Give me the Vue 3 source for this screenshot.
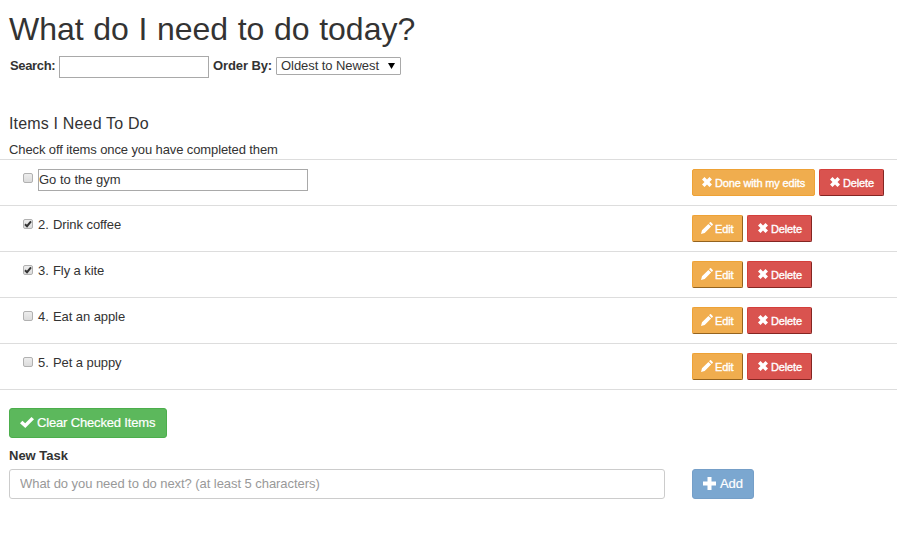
<script setup>
import { ref } from 'vue'

const search = ref('')
const order = ref('Oldest to Newest')
const draft = ref('')
const items = ref([
  { id: 1, text: 'Go to the gym', done: false, editing: true },
  { id: 2, text: 'Drink coffee', done: true, editing: false },
  { id: 3, text: 'Fly a kite', done: true, editing: false },
  { id: 4, text: 'Eat an apple', done: false, editing: false },
  { id: 5, text: 'Pet a puppy', done: false, editing: false }
])

function remove(id) {
  items.value = items.value.filter((i) => i.id !== id)
}
function clearChecked() {
  items.value = items.value.filter((i) => !i.done)
}
function add() {
  const nextId = Math.max(0, ...items.value.map((i) => i.id)) + 1
  items.value.push({ id: nextId, text: draft.value, done: false, editing: false })
  draft.value = ''
}
</script>

<template>
  <main class="page">
    <h1>What do I need to do today?</h1>
    <div class="filters">
      <label for="search">Search:</label>
      <input id="search" v-model="search" class="search" type="text" />
      <label for="order" class="order-label">Order By:</label>
      <div class="select">
        <select id="order" v-model="order">
          <option>Oldest to Newest</option>
          <option>Newest to Oldest</option>
        </select>
        <svg class="arrow" viewBox="0 0 7 6"><path d="M0 0h7L3.5 6z" /></svg>
      </div>
    </div>

    <h2>Items I Need To Do</h2>
    <p class="hint">Check off items once you have completed them</p>

    <ul class="list">
      <li v-for="item in items" :key="item.id" class="row">
        <div class="task">
          <span class="box">
            <input v-model="item.done" type="checkbox" />
            <svg v-if="item.done" viewBox="0 0 10 10"><path d="M2 5.3 4 7.2 8 2.4" /></svg>
          </span>
          <input v-if="item.editing" v-model="item.text" class="edit" type="text" />
          <span v-else class="name"><span class="number">{{ item.id }}.</span>{{ item.text }}</span>
        </div>
        <div class="actions">
          <button v-if="item.editing" class="btn small warning done" @click="item.editing = false">
            <svg class="cross" viewBox="0 0 10 10"><path d="M2.5 0 5 2.5 7.5 0 10 2.5 7.5 5 10 7.5 7.5 10 5 7.5 2.5 10 0 7.5 2.5 5 0 2.5z" /></svg>
            <span>Done with my edits</span>
          </button>
          <button v-else class="btn small warning bevel" @click="item.editing = true">
            <svg class="pencil" viewBox="0 0 12 12"><path d="M0 12 1 8.3 7.4 1.9 10.1 4.6 3.7 11zM8.1 1.2 9 .3Q9.5-.2 10 .3L11.7 2Q12.2 2.5 11.7 3L10.8 3.9z" /></svg>
            <span>Edit</span>
          </button>
          <button class="btn small danger bevel" @click="remove(item.id)">
            <svg class="cross" viewBox="0 0 10 10"><path d="M2.5 0 5 2.5 7.5 0 10 2.5 7.5 5 10 7.5 7.5 10 5 7.5 2.5 10 0 7.5 2.5 5 0 2.5z" /></svg>
            <span>Delete</span>
          </button>
        </div>
      </li>
    </ul>

    <button class="btn success" @click="clearChecked">
      <svg class="tick" viewBox="0 0 14 11"><path d="M0 6.2 2.4 3.8 5.2 6.3 11.5 0 14 2.3 5.3 11z" /></svg>
      <span>Clear Checked Items</span>
    </button>

    <label class="new-label" for="task">New Task</label>
    <div class="new-row">
      <input id="task" v-model="draft" class="new-task" type="text" placeholder="What do you need to do next? (at least 5 characters)" />
      <button class="btn primary" :disabled="draft.length < 5" @click="add">
        <svg class="plus" viewBox="0 0 13 13"><path d="M4.5 0h4v4.5H13v4H8.5V13h-4V8.5H0v-4h4.5z" /></svg>
        <span>Add</span>
      </button>
    </div>
  </main>
</template>

<style>
body {
  margin: 0;
  background: #fff;
}
</style>

<style scoped>
* {
  box-sizing: border-box;
}
.page {
  height: 535px;
  padding-top: 10px;
  overflow: hidden;
  color: #333;
  font: 13px/18px "Liberation Sans", Arial, sans-serif;
}
input,
select,
button {
  margin: 0;
  font: inherit;
  color: inherit;
  letter-spacing: inherit;
}
h1 {
  height: 36px;
  margin: 0 0 0 9px;
  font-size: 32px;
  font-weight: 400;
  line-height: 38px;
  word-spacing: 0.7px;
}
.filters {
  display: flex;
  height: 32px;
  padding: 10px 0 0 10px;
}
label {
  font-weight: 700;
}
.filters label {
  width: 49px;
  padding-top: 1px;
  letter-spacing: -0.35px;
  white-space: nowrap;
}
.search {
  width: 150px;
  height: 22px;
  border: 1px solid #a9a9a9;
}
.filters .order-label {
  width: 63px;
  margin-left: 4px;
  letter-spacing: -0.1px;
}
.select {
  position: relative;
  width: 125px;
  height: 18px;
  margin-top: 1px;
  letter-spacing: -0.06px;
}
select {
  display: block;
  width: 100%;
  height: 18px;
  padding: 0 4px;
  border: 1px solid #a9a9a9;
  border-radius: 1px;
  background: #fff;
  line-height: 16px;
  appearance: none;
}
.arrow {
  position: absolute;
  top: 6px;
  right: 6px;
  width: 7px;
  height: 6px;
  fill: #000;
}
h2 {
  margin: 36px 0 0 9px;
  font-size: 16px;
  font-weight: 400;
  line-height: 20px;
  letter-spacing: 0.17px;
}
.hint {
  margin: 6px 0 0 9px;
  line-height: 19px;
  letter-spacing: -0.11px;
}
.list {
  margin: 0;
  padding: 0;
  list-style: none;
}
.row {
  display: flex;
  height: 46px;
  border-top: 1px solid #ddd;
}
.row:last-child {
  height: 47px;
  border-bottom: 1px solid #ddd;
}
.task {
  display: flex;
  width: 692px;
  padding: 9px 0 0 23px;
}
.box {
  position: relative;
  width: 10px;
  height: 10px;
  margin: 4px 5px 0 0;
}
.box input {
  display: block;
  width: 10px;
  height: 10px;
  border: 1px solid #b1b1b1;
  border-radius: 2px;
  background: linear-gradient(#ededed, #dcdcdc);
  appearance: none;
}
.box svg {
  position: absolute;
  inset: 0;
  width: 10px;
  height: 10px;
  fill: none;
  stroke: #333;
  stroke-width: 2;
  pointer-events: none;
}
.edit {
  width: 270px;
  height: 22px;
  padding: 0 0 2px;
  border: 1px solid #a9a9a9;
}
.name {
  padding-top: 1px;
  letter-spacing: -0.08px;
}
.number {
  display: inline-block;
  width: 15px;
}
.actions {
  display: flex;
  gap: 4px;
  padding-top: 9px;
}
.btn {
  display: flex;
  align-items: center;
  height: 30px;
  padding: 0 10px;
  border: 1px solid;
  border-radius: 3px;
  color: #fff;
  white-space: nowrap;
}
.btn svg {
  flex: none;
  fill: #fff;
}
.small {
  height: 27px;
  padding: 1px 9px 0;
  border-radius: 2px;
  font-size: 11px;
  letter-spacing: -0.16px;
  -webkit-text-stroke: 0.35px #fff;
}
.small svg {
  margin-top: -3px;
}
.warning {
  width: 51px;
  border-color: #eea236;
  background: #f0ad4e;
}
.done {
  width: 123px;
}
.warning.bevel {
  padding-left: 8px;
  border-right-color: #94631e;
  border-bottom-color: #94631e;
}
.danger {
  width: 65px;
  padding-left: 10px;
  border-color: #d43f3a;
  border-right-color: #842522;
  border-bottom-color: #842522;
  background: #d9534f;
}
.cross {
  width: 10px;
  height: 10px;
  margin-right: 3px;
}
.pencil {
  width: 12px;
  height: 12px;
  margin-right: 2px;
}
.warning.bevel .pencil {
  margin-top: -2px;
}
.success {
  width: 158px;
  margin: 18px 0 0 9px;
  border-color: #4cae4c;
  background: #5cb85c;
  letter-spacing: -0.16px;
}
.success,
.primary {
  -webkit-text-stroke: 0.2px #fff;
}
.tick {
  width: 14px;
  height: 11px;
  margin: -1px 3px 0 0;
}
.new-label {
  display: block;
  margin: 9px 0 4px 9px;
}
.new-row {
  display: flex;
  padding-left: 9px;
}
.new-task {
  width: 656px;
  height: 30px;
  margin-right: 27px;
  padding: 0 10px 1px;
  border: 1px solid #ccc;
  border-radius: 3px;
  letter-spacing: -0.06px;
}
.new-task::placeholder {
  color: #999;
  opacity: 1;
}
.primary {
  width: 62px;
  border-color: #759fc8;
  background: #7ba7d0;
  letter-spacing: -0.1px;
}
.plus {
  width: 13px;
  height: 13px;
  margin: -2px 4px 0 0;
}
</style>
